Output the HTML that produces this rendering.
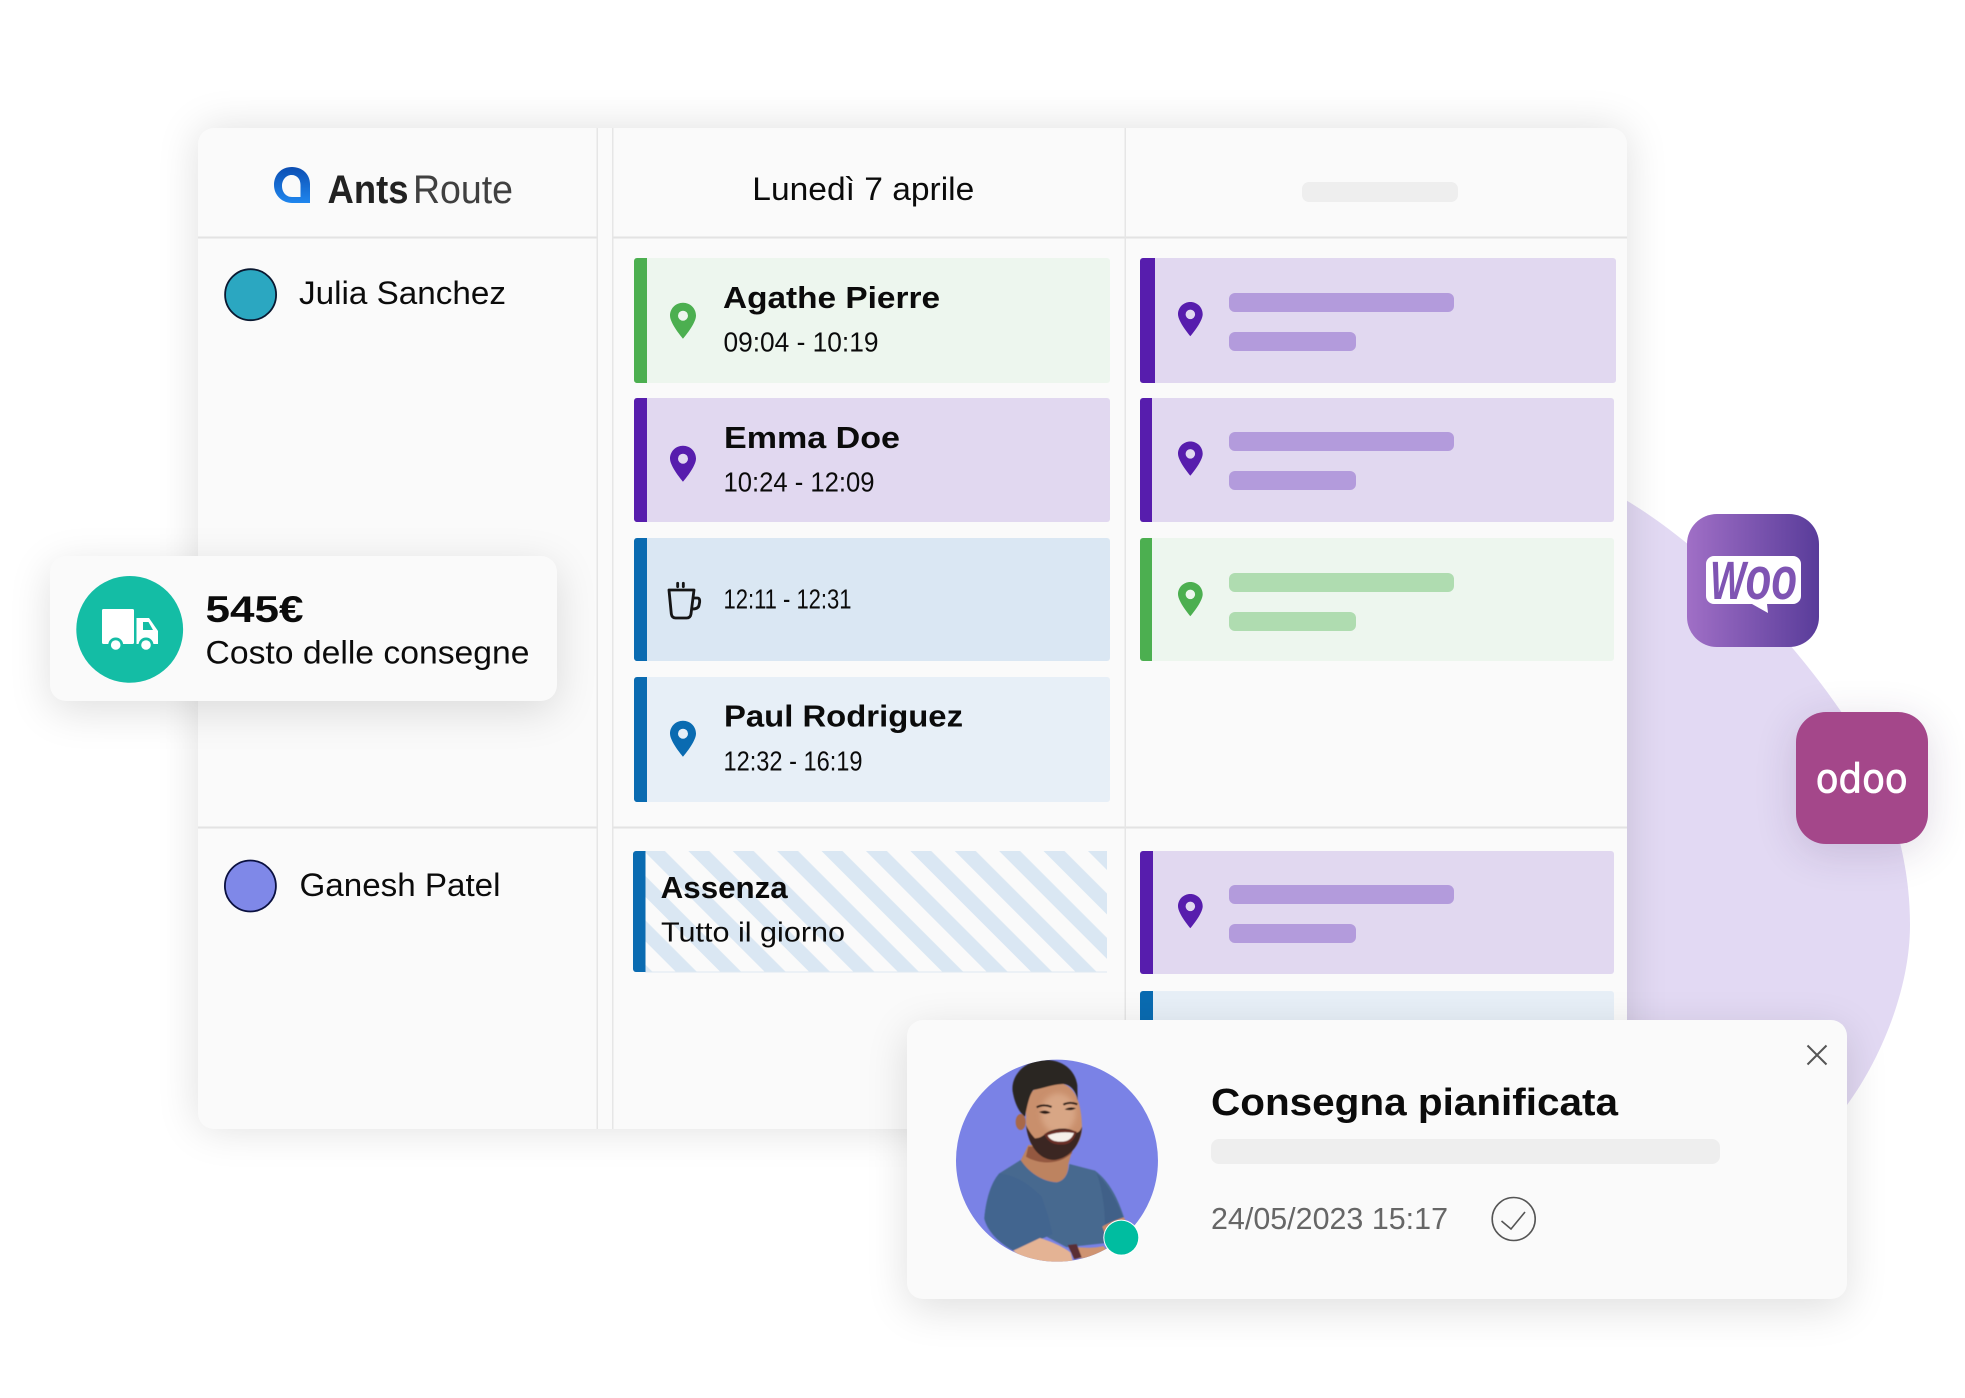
<!DOCTYPE html>
<html lang="it">
<head>
<meta charset="utf-8">
<title>AntsRoute</title>
<style>
html,body{margin:0;padding:0;background:#fff;}
body{position:relative;width:1965px;height:1398px;overflow:hidden;font-family:"Liberation Sans",sans-serif;}
.abs{position:absolute;}
svg.layer{position:absolute;left:0;top:0;width:1965px;height:1398px;}
svg text{font-family:"Liberation Sans",sans-serif;fill:#0b0b0b;}
.b{font-weight:700;}
.panel{left:198px;top:128px;width:1429px;height:1001px;background:#fafafa;border-radius:16px;box-shadow:0 0 42px rgba(0,0,0,.13);}
.cost{left:50px;top:556px;width:507px;height:145px;background:#fafafa;border-radius:16px;box-shadow:0 10px 42px rgba(0,0,0,.13);}
.pop{left:907px;top:1020px;width:940px;height:279px;background:#fafafa;border-radius:16px;box-shadow:0 10px 42px rgba(0,0,0,.13);}
.woo{left:1687px;top:514px;width:132px;height:133px;border-radius:30px;background:linear-gradient(90deg,#a06fc6,#593c9a);}
.odoo{left:1796px;top:712px;width:132px;height:132px;border-radius:30px;background:#a4478a;box-shadow:0 8px 42px rgba(60,30,90,.16);}
</style>
</head>
<body>

<svg class="layer" viewBox="0 0 1965 1398">
  <path d="M1600 486 C1690 530 1785 630 1840 710 C1885 775 1910 850 1910 925 C1910 990 1880 1060 1847 1105 L1600 1105 Z" fill="#e2d9f3"/>
</svg>

<div class="abs panel"></div>

<svg class="layer" viewBox="0 0 1965 1398">
  <defs>
    <path id="pin" fill-rule="evenodd" d="M13 0C5.8 0 0 5.7 0 12.9 0 21 13 36 13 36S26 21 26 12.9C26 5.7 20.2 0 13 0ZM13 18a5 5 0 1 1 0-10 5 5 0 0 1 0 10Z"/>
    <pattern id="hatch" width="31.4" height="31.4" patternUnits="userSpaceOnUse" patternTransform="translate(688.3 851) rotate(45)">
      <rect x="0" y="16.6" width="31.4" height="14.8" fill="#dae7f3"/>
    </pattern>
    <clipPath id="av"><circle cx="471" cy="452" r="303"/></clipPath>
    <linearGradient id="lg" x1="0" y1="0" x2="0" y2="1"><stop offset="0" stop-color="#0c4eb2"/><stop offset="1" stop-color="#1f86ee"/></linearGradient>
  </defs>

  <!-- grid lines -->
  <rect x="198" y="236.5" width="399" height="2" fill="#e3e3e3"/>
  <rect x="612" y="236.5" width="1015" height="2" fill="#e3e3e3"/>
  <rect x="198" y="826.5" width="399" height="2" fill="#e3e3e3"/>
  <rect x="612" y="826.5" width="1015" height="2" fill="#e3e3e3"/>
  <rect x="596.5" y="128" width="1.5" height="1001" fill="#e6e6e6"/>
  <rect x="612" y="128" width="1.5" height="1001" fill="#e6e6e6"/>
  <rect x="1124.5" y="128" width="1.5" height="1001" fill="#e6e6e6"/>

  <!-- logo -->
  <path fill-rule="evenodd" d="M292 167C281 167 274 175 274 185C274 196 283 203 292 203H310V184C310 174 302 167 292 167ZM291.5 175C297 175 300.5 179 300.5 185V197H292C285.500 197 282 191.500 282 186C282 180 286 175 291.500 175Z" fill="url(#lg)"/>
  <text class="b" x="327.500" y="203" font-size="40" textLength="81" lengthAdjust="spacingAndGlyphs" style="fill:#222">Ants</text>
  <text x="413" y="203" font-size="40" textLength="100" lengthAdjust="spacingAndGlyphs" style="fill:#2c2c2c" opacity=".9">Route</text>

  <text x="752.3" y="200" font-size="32" textLength="222" lengthAdjust="spacingAndGlyphs">Lunedì 7 aprile</text>
  <rect x="1302" y="182" width="156" height="20" rx="7" fill="#eeeeee"/>

  <!-- drivers -->
  <circle cx="250.6" cy="294.7" r="25.5" fill="#2ba7c1" stroke="#0a1830" stroke-width="1.8"/>
  <text x="299" y="304" font-size="32" textLength="207" lengthAdjust="spacingAndGlyphs">Julia Sanchez</text>
  <circle cx="250.4" cy="886" r="25.5" fill="#7f88e8" stroke="#0a1040" stroke-width="1.8"/>
  <text x="299.500" y="896" font-size="32" textLength="201" lengthAdjust="spacingAndGlyphs">Ganesh Patel</text>

  <!-- col 1 cards -->
  <rect x="634" y="258" width="476" height="125" rx="3" fill="#edf6ee"/>
  <path d="M637 258H647V383H637a3 3 0 0 1-3-3V261a3 3 0 0 1 3-3Z" fill="#4caf50"/>
  <use href="#pin" x="670" y="302.7" fill="#4caf50"/>
  <text class="b" x="723" y="308" font-size="31" textLength="217" lengthAdjust="spacingAndGlyphs">Agathe Pierre</text>
  <text x="723.500" y="351.7" font-size="28" textLength="155" lengthAdjust="spacingAndGlyphs">09:04 - 10:19</text>

  <rect x="634" y="398" width="476" height="124" rx="3" fill="#e1d8f0"/>
  <path d="M637 398H647V522H637a3 3 0 0 1-3-3V401a3 3 0 0 1 3-3Z" fill="#571dad"/>
  <use href="#pin" x="670" y="445.7" fill="#571dad"/>
  <text class="b" x="724" y="448" font-size="31" textLength="176" lengthAdjust="spacingAndGlyphs">Emma Doe</text>
  <text x="723.500" y="491.7" font-size="28" textLength="151" lengthAdjust="spacingAndGlyphs">10:24 - 12:09</text>

  <rect x="634" y="538" width="476" height="123" rx="3" fill="#dae7f3"/>
  <path d="M637 538H647V661H637a3 3 0 0 1-3-3V541a3 3 0 0 1 3-3Z" fill="#0a6bb1"/>
  <g transform="translate(620 530) scale(.3333)" fill="none" stroke="#151515" stroke-width="8.500" stroke-linecap="round" stroke-linejoin="round">
    <path d="M147 180H222L213 252Q211 264 200 264H167Q156 264 154 252Z"/>
    <path d="M222 204H232Q240 204 239 216L237 226Q235 237 217 237"/>
    <path d="M173 160V170M190 160V170"/>
  </g>
  <text x="723.500" y="608.7" font-size="28" textLength="128" lengthAdjust="spacingAndGlyphs">12:11 - 12:31</text>

  <rect x="634" y="677" width="476" height="125" rx="3" fill="#e7eff7"/>
  <path d="M637 677H647V802H637a3 3 0 0 1-3-3V680a3 3 0 0 1 3-3Z" fill="#0a6bb1"/>
  <use href="#pin" x="670" y="720.7" fill="#0a6bb1"/>
  <text class="b" x="724" y="726.7" font-size="31" textLength="239" lengthAdjust="spacingAndGlyphs">Paul Rodriguez</text>
  <text x="723.500" y="770.7" font-size="28" textLength="139" lengthAdjust="spacingAndGlyphs">12:32 - 16:19</text>

  <!-- absence -->
  <rect x="645" y="851" width="462" height="121" fill="url(#hatch)"/>
  <rect x="645" y="971.5" width="462" height="1" fill="#dde8f2"/>
  <path d="M636 851H645.5V972H636a3 3 0 0 1-3-3V854a3 3 0 0 1 3-3Z" fill="#0a6bb1"/>
  <text class="b" x="660.7" y="898" font-size="31" textLength="127" lengthAdjust="spacingAndGlyphs">Assenza</text>
  <text x="661" y="941.7" font-size="28" textLength="184" lengthAdjust="spacingAndGlyphs">Tutto il giorno</text>

  <!-- col 2 cards -->
  <rect x="1140" y="258" width="476" height="125" rx="3" fill="#e1d8f0"/>
  <path d="M1143 258H1155V383H1143a3 3 0 0 1-3-3V261a3 3 0 0 1 3-3Z" fill="#571dad"/>
  <use href="#pin" transform="translate(1178 302) scale(.95)" fill="#571dad"/>
  <rect x="1229" y="293" width="225" height="19" rx="6" fill="#b39bdc"/>
  <rect x="1229" y="332" width="127" height="19" rx="6" fill="#b39bdc"/>

  <rect x="1140" y="398" width="474" height="124" rx="3" fill="#e1d8f0"/>
  <path d="M1143 398H1152V522H1143a3 3 0 0 1-3-3V401a3 3 0 0 1 3-3Z" fill="#571dad"/>
  <use href="#pin" transform="translate(1178 441.5) scale(.95)" fill="#571dad"/>
  <rect x="1229" y="432" width="225" height="19" rx="6" fill="#b39bdc"/>
  <rect x="1229" y="471" width="127" height="19" rx="6" fill="#b39bdc"/>

  <rect x="1140" y="538" width="474" height="123" rx="3" fill="#edf6ee"/>
  <path d="M1143 538H1152V661H1143a3 3 0 0 1-3-3V541a3 3 0 0 1 3-3Z" fill="#4caf50"/>
  <use href="#pin" transform="translate(1178 582) scale(.95)" fill="#4caf50"/>
  <rect x="1229" y="573" width="225" height="19" rx="6" fill="#afdcb0"/>
  <rect x="1229" y="612" width="127" height="19" rx="6" fill="#afdcb0"/>

  <rect x="1140" y="851" width="474" height="123" rx="3" fill="#e1d8f0"/>
  <path d="M1143 851H1153V974H1143a3 3 0 0 1-3-3V854a3 3 0 0 1 3-3Z" fill="#571dad"/>
  <use href="#pin" transform="translate(1178 894) scale(.95)" fill="#571dad"/>
  <rect x="1229" y="885" width="225" height="19" rx="6" fill="#b39bdc"/>
  <rect x="1229" y="924" width="127" height="19" rx="6" fill="#b39bdc"/>

  <rect x="1140" y="991" width="474" height="60" rx="3" fill="#e7eff7"/>
  <path d="M1143 991H1153V1051H1140V994a3 3 0 0 1 3-3Z" fill="#0a6bb1"/>
</svg>

<div class="abs cost"></div>
<div class="abs pop"></div>
<div class="abs woo"></div>
<div class="abs odoo"></div>

<svg class="layer" viewBox="0 0 1965 1398">
  <defs>
    <filter id="soft2" x="-10%" y="-10%" width="120%" height="120%"><feGaussianBlur stdDeviation="1.5"/></filter>
    <filter id="soft3" x="-30%" y="-30%" width="160%" height="160%"><feGaussianBlur stdDeviation="8"/></filter>
  </defs>

  <!-- cost card -->
  <circle cx="129.7" cy="629.4" r="53.4" fill="#14bda5"/>
  <rect x="102" y="609" width="32" height="35" rx="1.5" fill="#fff"/>
  <path d="M136.5 618H149L158 631V644H136.5Z" fill="#fff"/>
  <path d="M143 622H148.5L153 630H143Z" fill="#14bda5"/>
  <circle cx="115.7" cy="645" r="7.500" fill="#14bda5"/><circle cx="115.7" cy="645" r="4.800" fill="#fff"/>
  <circle cx="146" cy="645" r="7.500" fill="#14bda5"/><circle cx="146" cy="645" r="4.800" fill="#fff"/>
  <text class="b" x="205.500" y="622" font-size="37" textLength="98" lengthAdjust="spacingAndGlyphs">545€</text>
  <text x="205.500" y="663.3" font-size="32" textLength="324" lengthAdjust="spacingAndGlyphs">Costo delle consegne</text>

  <!-- woo -->
  <path d="M1714 556H1793a8 8 0 0 1 8 8V596a8 8 0 0 1-8 8H1767L1768 613 1752 604H1714a8 8 0 0 1-8-8V564a8 8 0 0 1 8-8Z" fill="#fff"/>
  <text x="1710" y="599" textLength="87" lengthAdjust="spacingAndGlyphs" class="b" font-style="italic" style="fill:#7f54b3" font-size="54">W<tspan font-size="60">oo</tspan></text>

  <!-- odoo -->
  <text x="1815.7" y="792.7" font-size="40" textLength="92" lengthAdjust="spacingAndGlyphs" style="font-family:'DejaVu Sans',sans-serif;fill:#fff;stroke:#fff;stroke-width:.8">odoo</text>

  <!-- avatar -->
  <g transform="translate(900 1010) scale(.3333)">
    <circle cx="471" cy="452" r="303" fill="#7a82e6"/>
    <g clip-path="url(#av)">
      <g filter="url(#soft2)">
        <!-- neck -->
        <path d="M385 405L362 452C385 485 425 515 470 517C495 512 505 490 505 462L520 410Z" fill="#bd8361"/>
        <path d="M385 410L378 440C410 460 470 470 515 430L520 410Z" fill="#94583f"/>
        <!-- shirt -->
        <path d="M362 450C385 485 425 515 470 517C495 512 505 490 508 462L585 482C630 515 655 570 672 622L612 700L500 712L440 680L340 722C300 700 262 665 253 625C258 570 272 520 298 490Z" fill="#47698f"/>
        <path d="M298 490C272 520 258 570 253 625C262 665 300 700 340 722L458 672L445 620L425 560C385 520 345 495 298 490Z" fill="#42658f"/>
        <path d="M590 490C620 520 650 570 668 620L615 645C615 590 605 530 590 490Z" fill="#3f6088"/>
        <!-- arms -->
        <path d="M340 722L420 684C450 693 490 710 512 728L520 760H380Z" fill="#e4b394"/>
        <path d="M530 712C560 714 590 714 610 708L622 722L560 745L535 745Z" fill="#cf9472"/>
        <path d="M607 650C622 640 650 628 672 622L680 640L622 690Z" fill="#c98a68"/>
        <path d="M503 705L530 702L545 742L523 748Z" fill="#5a2f35"/>
        <!-- head -->
        <path d="M378 300C372 240 430 215 480 220C525 225 545 280 546 350C546 400 510 445 462 448C420 448 385 400 378 340Z" fill="#c98f6c"/>
        <ellipse cx="475" cy="310" rx="52" ry="60" fill="#d8a685" filter="url(#soft3)"/>
        <ellipse cx="362" cy="336" rx="15" ry="24" fill="#a8684a"/>
        <!-- beard -->
        <path d="M378 345C385 410 420 450 462 450C515 445 545 395 546 350C540 365 532 372 525 365C505 352 470 352 440 368C425 382 415 385 405 385C395 375 385 360 378 345Z" fill="#3a2720"/>
        <path d="M433 372Q482 350 530 365Q520 406 482 404Q445 404 433 372Z" fill="#6b2f28"/>
        <path d="M443 376Q482 362 522 369Q512 396 482 395Q452 395 443 376Z" fill="#f6f0ea"/>
        <!-- hair -->
        <path d="M338 245C332 200 370 155 425 150C480 145 525 175 532 225L533 272C528 245 515 225 490 222C460 222 430 235 400 240C388 255 382 285 375 320C360 310 345 285 338 245Z" fill="#2a2522"/>
        <!-- eyes -->
        <path d="M417 306Q435 297 452 308Q435 316 417 306Z" fill="#2b1a14"/>
        <path d="M494 298Q512 288 528 295Q512 304 494 298Z" fill="#2b1a14"/>
        <path d="M410 292Q430 281 455 291" stroke="#2a1a14" stroke-width="6" fill="none"/>
        <path d="M490 284Q510 274 532 283" stroke="#2a1a14" stroke-width="6" fill="none"/>
      </g>
    </g>
    <circle cx="664" cy="683" r="54" fill="#fff"/>
    <circle cx="664" cy="683" r="51" fill="#00bda0"/>
  </g>

  <!-- popup text -->
  <text class="b" x="1211" y="1115" font-size="38" textLength="407" lengthAdjust="spacingAndGlyphs">Consegna pianificata</text>
  <rect x="1211" y="1139" width="509" height="25" rx="8" fill="#eeeeee"/>
  <text x="1211" y="1229" font-size="31" textLength="237" lengthAdjust="spacingAndGlyphs" style="fill:#666">24/05/2023 15:17</text>
  <circle cx="1513.7" cy="1219" r="21.5" fill="none" stroke="#555" stroke-width="1.6"/>
  <path d="M1501.5 1221L1511 1229L1525 1212" fill="none" stroke="#555" stroke-width="1.6"/>
  <path d="M1807.5 1045.5L1826.5 1064.5M1826.5 1045.5L1807.5 1064.5" stroke="#555" stroke-width="2" fill="none"/>
</svg>

</body>
</html>
